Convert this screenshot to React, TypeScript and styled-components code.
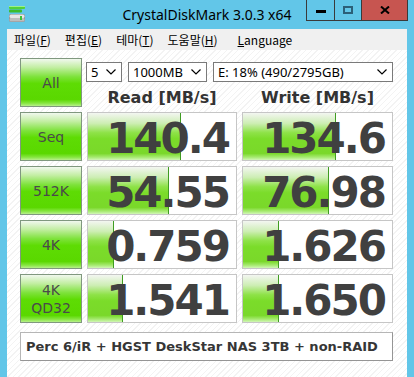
import React from 'react';
import styled, { createGlobalStyle } from 'styled-components';

type ResultRow = {
    label: string[],
    read: number,
    write: number,
    readText: string,
    writeText: string
}

const rows: ResultRow[] = [
    { label: ['Seq'], read: 140.4, write: 134.6, readText: '140.4', writeText: '134.6' },
    { label: ['512K'], read: 54.55, write: 76.98, readText: '54.55', writeText: '76.98' },
    { label: ['4K'], read: 0.759, write: 1.626, readText: '0.759', writeText: '1.626' },
    { label: ['4K', 'QD32'], read: 1.541, write: 1.650, readText: '1.541', writeText: '1.650' },
];

const menu = [
    { text: '파일', key: 'F' },
    { text: '편집', key: 'E' },
    { text: '테마', key: 'T' },
    { text: '도움말', key: 'H' },
];

// same log scale the app uses for its meters
const meter = (v: number) => Math.max(0, Math.min(100, Math.log10(v * 10) / 5 * 100));

const GlobalStyle = createGlobalStyle`
  html, body {
    margin: 0;
    padding: 0;
  }
  body {
    width: 414px;
    height: 377px;
    overflow: hidden;
    background: #62c6e8;
  }
`

const Window = styled.div`
  width: 414px;
  height: 377px;
  background: #62c6e8;
  display: flex;
  flex-direction: column;
`

const TitleBar = styled.div`
  height: 29px;
  display: grid;
  grid-template-columns: 1fr auto 1fr;
  align-items: start;
`

const AppIcon = styled.svg`
  margin: 5px 0 0 8px;
`

const Title = styled.div`
  font-family: "Noto Sans", sans-serif;
  font-size: 14px;
  line-height: 29px;
  color: #000;
`

const WinButtons = styled.div`
  justify-self: end;
  margin-right: 6px;
  display: flex;
  height: 21px;
  border: 1px solid #3a3a3a;
  border-top: none;
  box-sizing: border-box;
`

const WinButton = styled.div<{ $w: number, $close?: boolean }>`
  width: ${p => p.$w}px;
  height: 100%;
  display: flex;
  align-items: center;
  justify-content: center;
  background: ${p => p.$close ? '#c75550' : 'transparent'};
  & + & {
    border-left: 1px solid #3a3a3a;
  }
`

const Client = styled.div`
  flex: 1;
  margin: 0 7px 7px 7px;
  display: flex;
  flex-direction: column;
`

const MenuBar = styled.div`
  height: 21px;
  background: #f0f0f0;
  display: flex;
  align-items: center;
  font-family: "Noto Sans CJK KR", "Noto Sans", sans-serif;
  font-size: 12px;
  color: #000;
`

const MenuItem = styled.span<{ $extra?: number }>`
  padding: 0 7px;
  margin-left: ${p => p.$extra ?? 0}px;
  & u {
    text-decoration: underline;
    text-underline-offset: 1px;
  }
`

const Content = styled.div`
  flex: 1;
  padding: 8px 14px 0 13px;
  background: repeating-linear-gradient(135deg, #ffffff 0px, #ffffff 3px, #f3f3f3 3px, #f3f3f3 4px);
`

const Board = styled.div`
  display: grid;
  grid-template-columns: 62px 150px 151px;
  grid-auto-rows: 49px;
  column-gap: 5px;
  row-gap: 5px;
`

const GreenButton = styled.div`
  box-sizing: border-box;
  border: 1px solid #80987f;
  background: linear-gradient(to bottom, #f1f8ee 0%, #c2eea2 18%, #7de23a 38%, #5edc04 52%, #5ad800 86%, #86e640 94%, #b8f08c 100%);
  display: flex;
  flex-direction: column;
  align-items: center;
  justify-content: center;
  font-family: "DejaVu Sans", sans-serif;
  font-size: 14px;
  line-height: 18px;
  color: #4a4a4a;
`

const TopRight = styled.div`
  grid-column: 2 / span 2;
  display: flex;
  flex-direction: column;
`

const SelectRow = styled.div`
  display: flex;
  gap: 6px;
  margin: 4px 0 0 -1px;
`

const Select = styled.div<{ $w: number }>`
  box-sizing: border-box;
  width: ${p => p.$w}px;
  height: 20px;
  border: 1px solid #7a7a7a;
  background: #fff;
  display: flex;
  align-items: center;
  justify-content: space-between;
  padding: 0 5px 0 4px;
  font-family: "Noto Sans", sans-serif;
  font-size: 13px;
  color: #000;
  white-space: nowrap;
`

const HeaderRow = styled.div`
  flex: 1;
  display: grid;
  grid-template-columns: 150px 151px;
  column-gap: 5px;
  padding-top: 5px;
`

const Header = styled.div`
  text-align: center;
  font-family: "DejaVu Sans", sans-serif;
  font-weight: bold;
  font-size: 16px;
  line-height: 22px;
  color: #333;
`

const Cell = styled.div`
  box-sizing: border-box;
  border: 1px solid #c6c6c6;
  background-color: #fff;
  background-image:
    linear-gradient(to left, #3f9c22 1px, transparent 1px),
    linear-gradient(to bottom, #f3f6f1 0%, #cdeeb4 22%, #8ee248 42%, #7bdc2a 55%, #7ad82a 86%, #a6ea70 94%, #d2f6b8 100%);
  background-size: var(--w) 100%;
  background-repeat: no-repeat;
  text-align: right;
  padding: 5px 7px 0 0;
  font-family: "DejaVu Sans", sans-serif;
  font-weight: bold;
  font-size: 42px;
  letter-spacing: -2px;
  line-height: 42px;
  color: #404040;
`

const Comment = styled.div`
  grid-column: 1 / -1;
  margin-top: 4px;
  height: 29px;
  box-sizing: border-box;
  border: 1px solid #b6b6b6;
  border-right-color: #959595;
  border-bottom-color: #959595;
  background: #fff;
  padding-left: 5px;
  font-family: "DejaVu Sans", sans-serif;
  font-weight: bold;
  font-size: 13px;
  line-height: 27px;
  color: #363636;
`

const Chevron = () => (
    <svg width="10" height="6" viewBox="0 0 10 6">
        <polyline points="0.5,0.5 5,5 9.5,0.5" fill="none" stroke="#000" strokeWidth="1.2"/>
    </svg>
);

const DiskIcon = () => (
    <AppIcon width="18" height="18" viewBox="0 0 18 18">
        <rect x="1" y="1" width="16" height="3" rx="1" fill="#4fd23a"/>
        <rect x="1" y="1" width="16" height="1" fill="#9cf08a"/>
        <rect x="1" y="4.5" width="13" height="3" rx="1" fill="#3cbc2c"/>
        <rect x="1" y="9" width="16" height="8" rx="2" fill="#8c8c8c"/>
        <rect x="1.5" y="9.5" width="15" height="3.5" rx="1.5" fill="#e6e6e6"/>
        <rect x="1.5" y="13" width="15" height="3.5" rx="1" fill="#bdbdbd"/>
        <rect x="12" y="11" width="2" height="4" fill="#3cc23a"/>
    </AppIcon>
);

const Meter = ({ value, text }: { value: number, text: string }) => (
    <Cell style={{ '--w': `${meter(value)}%` } as React.CSSProperties}>{text}</Cell>
);

export default function App() {
    return (
        <Window>
            <GlobalStyle/>
            <TitleBar>
                <DiskIcon/>
                <Title>CrystalDiskMark 3.0.3 x64</Title>
                <WinButtons>
                    <WinButton $w={27}>
                        <svg width="10" height="6" viewBox="0 0 10 6">
                            <rect x="0" y="3" width="10" height="3" fill="#000"/>
                        </svg>
                    </WinButton>
                    <WinButton $w={26}>
                        <svg width="10" height="8" viewBox="0 0 10 8">
                            <rect x="1" y="1" width="8" height="6" fill="none" stroke="#2b5f78" strokeWidth="2"/>
                        </svg>
                    </WinButton>
                    <WinButton $w={45} $close>
                        <svg width="10" height="8" viewBox="0 0 10 8">
                            <path d="M1 0.5 L9 7.5 M9 0.5 L1 7.5" stroke="#000" strokeWidth="2"/>
                        </svg>
                    </WinButton>
                </WinButtons>
            </TitleBar>
            <Client>
                <MenuBar>
                    {menu.map(m => (
                        <MenuItem key={m.key}>{m.text}(<u>{m.key}</u>)</MenuItem>
                    ))}
                    <MenuItem $extra={6}><u>L</u>anguage</MenuItem>
                </MenuBar>
                <Content>
                    <Board>
                        <GreenButton>All</GreenButton>
                        <TopRight>
                            <SelectRow>
                                <Select $w={36}>5<Chevron/></Select>
                                <Select $w={79}>1000MB<Chevron/></Select>
                                <Select $w={180}>E: 18% (490/2795GB)<Chevron/></Select>
                            </SelectRow>
                            <HeaderRow>
                                <Header>Read [MB/s]</Header>
                                <Header>Write [MB/s]</Header>
                            </HeaderRow>
                        </TopRight>
                        {rows.map(r => (
                            <React.Fragment key={r.label.join()}>
                                <GreenButton>
                                    {r.label.map(l => <span key={l}>{l}</span>)}
                                </GreenButton>
                                <Meter value={r.read} text={r.readText}/>
                                <Meter value={r.write} text={r.writeText}/>
                            </React.Fragment>
                        ))}
                        <Comment>Perc 6/iR + HGST DeskStar NAS 3TB + non-RAID</Comment>
                    </Board>
                </Content>
            </Client>
        </Window>
    );
}
